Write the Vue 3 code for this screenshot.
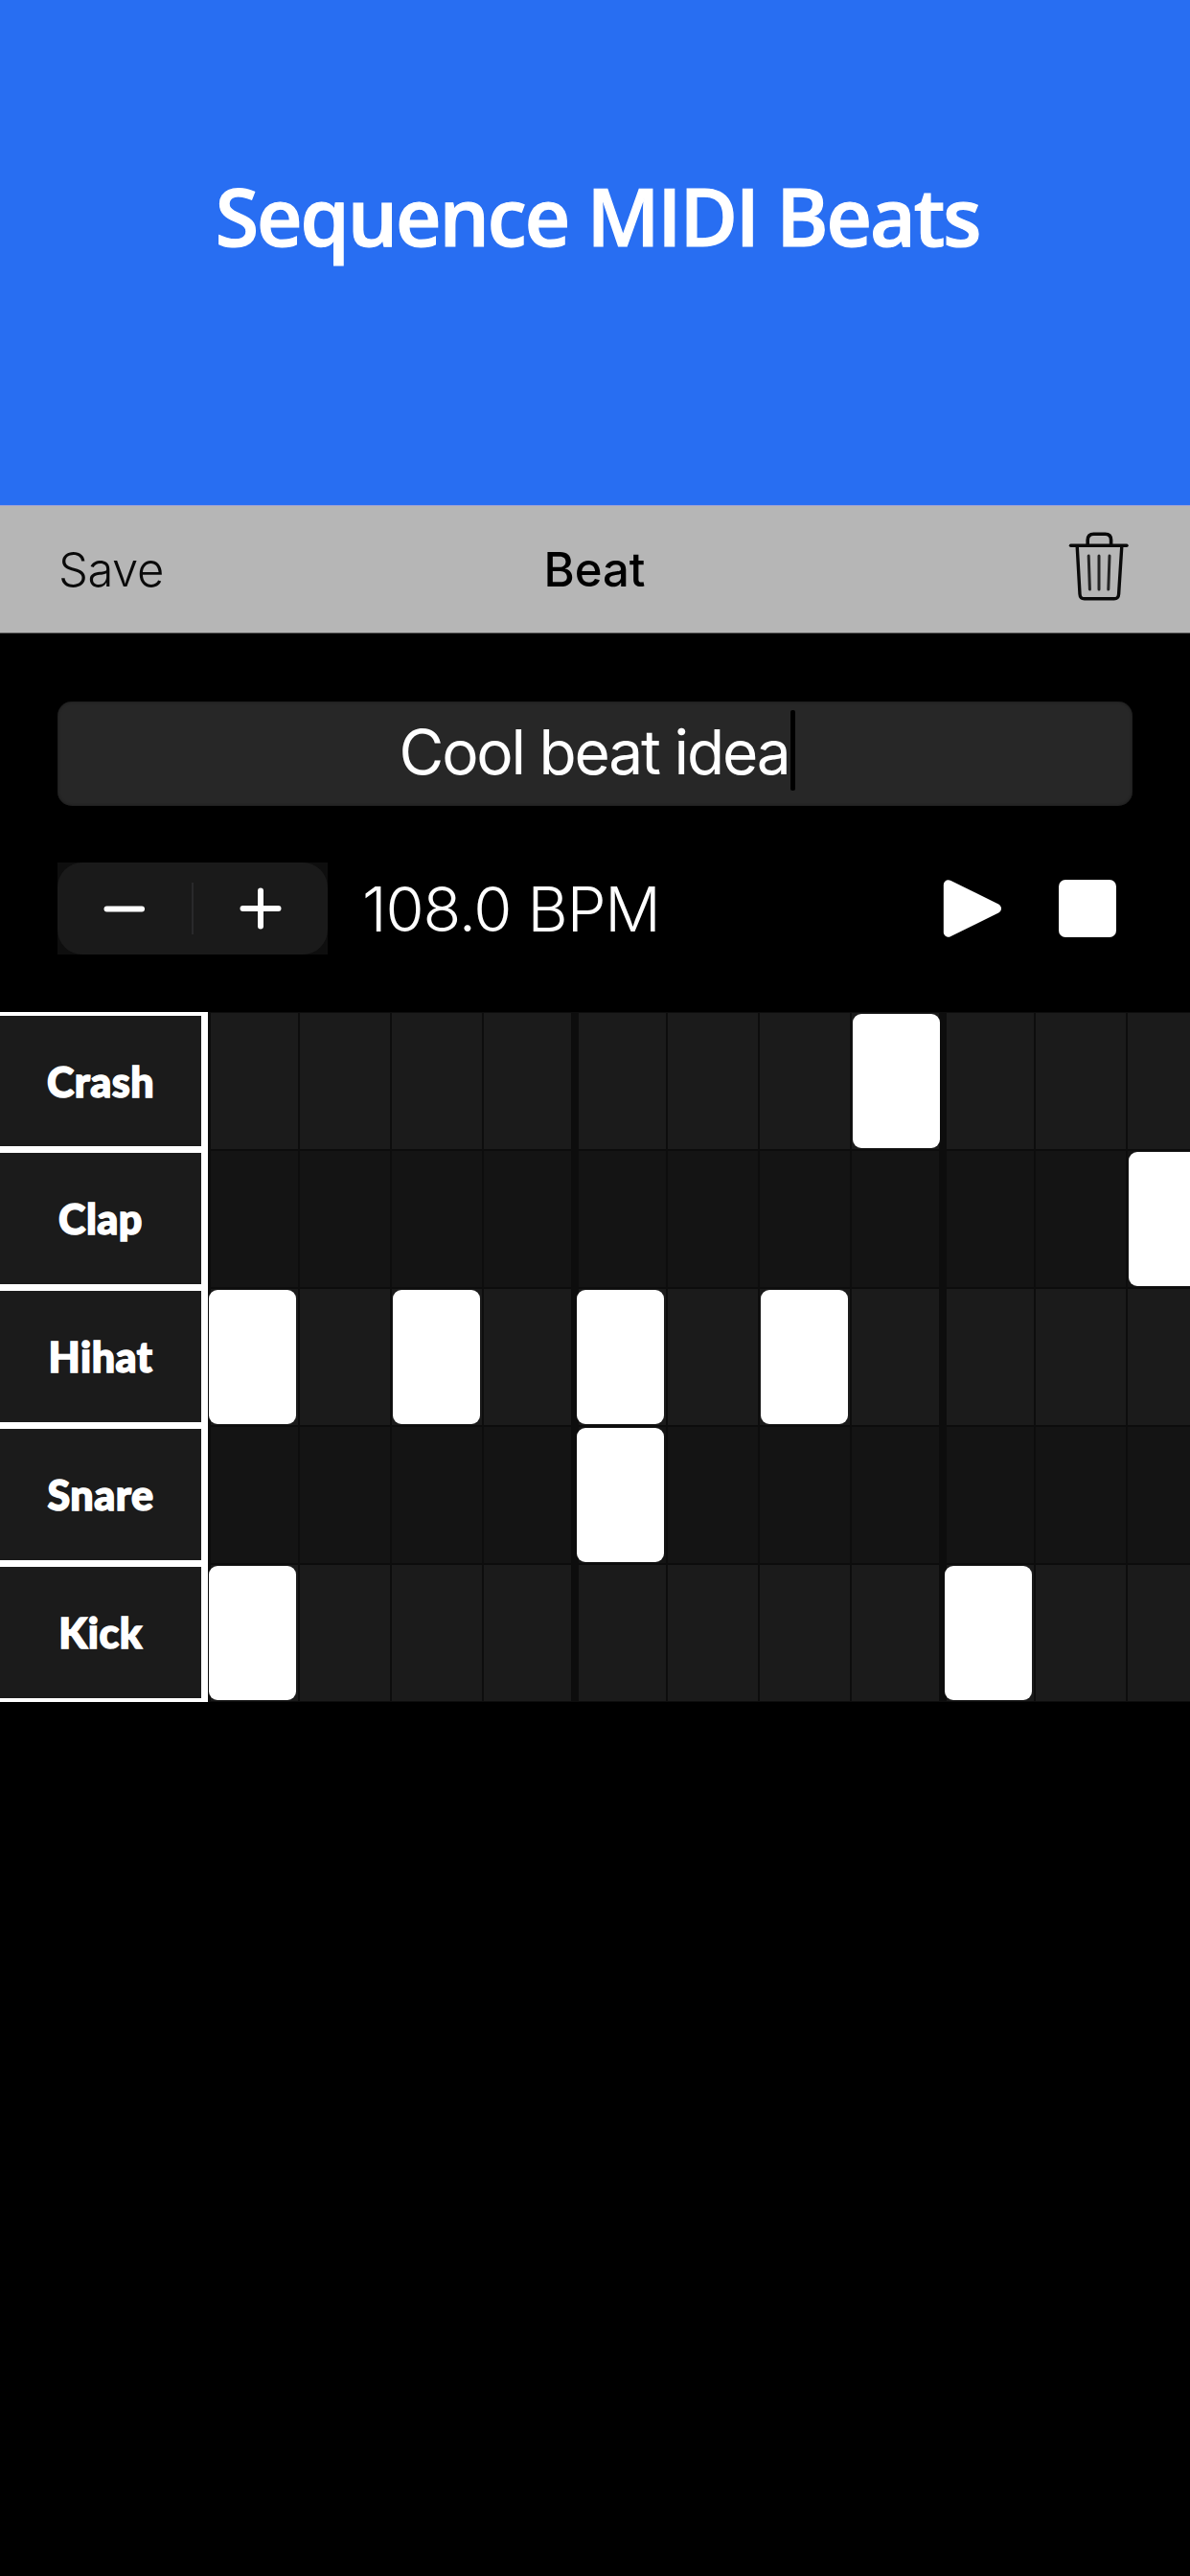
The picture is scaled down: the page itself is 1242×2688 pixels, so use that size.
<template>
  <div class="screen">
    <header class="banner">
      <h1>Sequence MIDI Beats</h1>
    </header>

    <nav class="nav-bar">
      <button type="button" class="nav-btn save">Save</button>
      <span class="nav-title">Beat</span>
      <button type="button" class="nav-btn trash" aria-label="Delete" @click="clearAll">
        <svg width="66" height="76" viewBox="0 0 66 76" fill="none" stroke="#0a0a0a" stroke-linecap="round" stroke-linejoin="round">
          <path d="M3.5 17.2H62" stroke-width="3.4" />
          <path d="M21.2 17V11.5Q21.2 5.2 27.5 5.2H39.5Q45.6 5.2 45.6 11.5V17" stroke-width="3.6" />
          <path d="M10.2 18L13 68Q13.3 72.8 17.8 72.8H48.8Q53.3 72.8 53.6 68L56.8 18" stroke-width="3.4" />
          <path d="M22.2 28L23.4 63M33 28V63M44 28L42.8 63" stroke="#242424" stroke-width="3" />
        </svg>
      </button>
    </nav>

    <div class="controls">
      <div class="name-field">
        <span class="name-text">{{ beatName }}</span><span class="caret"></span>
      </div>

      <div class="transport">
        <div class="stepper">
          <div class="stepper-inner">
            <button type="button" class="step-btn" aria-label="Slower" @click="bpm--">
              <svg width="46" height="46" viewBox="0 0 46 46" stroke="#fff" stroke-width="6" stroke-linecap="round">
                <path d="M4.5 23.5H41" />
              </svg>
            </button>
            <span class="step-divider"></span>
            <button type="button" class="step-btn" aria-label="Faster" @click="bpm++">
              <svg width="46" height="46" viewBox="0 0 46 46" stroke="#fff" stroke-width="6" stroke-linecap="round">
                <path d="M4.5 23H41.5M23 4.5V41.5" />
              </svg>
            </button>
          </div>
        </div>
        <span class="bpm">{{ bpm.toFixed(1) }} BPM</span>
        <button type="button" class="icon-btn play" aria-label="Play" @click="playing = true">
          <svg width="62" height="62" viewBox="0 0 62 62" fill="#fff" stroke="#fff" stroke-width="10" stroke-linejoin="round">
            <path d="M5.8 6.2L56 31L5.8 55.8Z" />
          </svg>
        </button>
        <button type="button" class="icon-btn stop" aria-label="Stop" @click="playing = false"></button>
      </div>
    </div>

    <div class="sequencer">
      <div v-for="track in tracks" :key="track.name" class="track">
        <div class="track-label">{{ track.name }}</div>
        <div class="steps">
          <div
            v-for="step in STEPS"
            :key="step"
            class="step"
            :class="{ 'beat-start': step % 4 === 1, 'beat-end': step % 4 === 0 }"
            @click="toggle(track, step)"
          >
            <div v-if="track.hits.includes(step)" class="note"></div>
          </div>
        </div>
      </div>
    </div>
  </div>
</template>

<script setup>
import { ref } from 'vue';

const STEPS = 16;

const beatName = ref('Cool beat idea');
const bpm = ref(108);
const playing = ref(false);

// step numbers start at 1
const tracks = ref([
  { name: 'Crash', hits: [8] },
  { name: 'Clap', hits: [11] },
  { name: 'Hihat', hits: [1, 3, 5, 7] },
  { name: 'Snare', hits: [5] },
  { name: 'Kick', hits: [1, 9] }
]);

function toggle(track, step) {
  const i = track.hits.indexOf(step);
  if (i >= 0) {
    track.hits.splice(i, 1);
  } else {
    track.hits.push(step);
  }
}

function clearAll() {
  tracks.value.forEach((t) => { t.hits = []; });
}
</script>

<style>
body { margin: 0; background: #000; }
</style>

<style scoped>
.screen {
  width: 1242px;
  height: 2688px;
  overflow: hidden;
  background: #000;
  color: #fff;
  font-family: Inter, "Liberation Sans", sans-serif;
}

button {
  padding: 0;
  border: none;
  background: none;
  color: inherit;
  font: inherit;
  cursor: pointer;
}

svg { display: block; }

.banner {
  height: 527px;
  background: #286ef2;
  text-align: center;
}
.banner h1 {
  margin: 0;
  padding: 169px 0 0 5px;
  font-family: "Open Sans", "Noto Sans", sans-serif;
  font-size: 82.5px;
  font-weight: 600;
  line-height: 112px;
  letter-spacing: -2.1px;
  -webkit-text-stroke: 1.2px #fff;
}

.nav-bar {
  display: grid;
  grid-template-columns: 1fr auto 1fr;
  align-items: center;
  height: 134px;
  padding: 0 62px 0 61px;
  box-sizing: border-box;
  border-top: 1px solid #9d9fd4;
  border-bottom: 1px solid #626262;
  background: #b6b6b6;
  color: #000;
}
.nav-btn.save { justify-self: start; font-size: 49px; font-weight: 300; letter-spacing: -0.5px; color: #0a0a0a; }
.nav-title { font-size: 49px; font-weight: 500; }
.nav-btn.trash { justify-self: end; margin-top: -8px; }

.controls { padding: 71px 60px 0; }

.name-field {
  display: flex;
  align-items: center;
  justify-content: center;
  height: 109px;
  border-radius: 15px;
  background: #272727;
  box-shadow: inset 0 0 3px #161616;
}
.name-text { margin-top: -4px; font-size: 64px; font-weight: 400; letter-spacing: -2.2px; line-height: 84px; }
.caret { width: 5px; height: 84px; margin: -7px -5px 0 2px; border-radius: 2px; background: #000; }

.transport {
  display: flex;
  align-items: center;
  height: 96px;
  margin-top: 59px;
}
.stepper { width: 282px; height: 96px; background: #0e0e0e; }
.stepper-inner {
  display: flex;
  align-items: center;
  height: 100%;
  border-radius: 26px;
  background: #1a1a1a;
}
.step-btn { flex: 1; display: flex; justify-content: center; }
.step-divider { width: 2px; height: 54px; background: #29292b; }
.bpm { margin-left: 36px; font-size: 65px; font-weight: 300; letter-spacing: -1.1px; }
.icon-btn.play { margin-left: auto; }
.icon-btn.stop {
  width: 60px;
  height: 60px;
  margin: 0 17px 0 59px;
  border-radius: 7px;
  background: #fff;
}

.sequencer { margin-top: 60px; }
.track { display: flex; height: 144px; }
.track-label {
  flex: none;
  display: flex;
  align-items: center;
  justify-content: center;
  width: 217px;
  box-sizing: border-box;
  z-index: 1;
  border: solid #fff;
  border-width: 3px 7px 4px 0;
  background: #1b1b1b;
  font-family: Lato, sans-serif;
  font-size: 43px;
  font-weight: 900;
  letter-spacing: 0.5px;
  -webkit-text-stroke: 1.5px #fff;
}
.track:first-child .track-label { border-top-width: 4px; }
.steps { display: flex; margin-left: -1px; }
.step {
  flex: none;
  width: 96px;
  height: 144px;
  box-sizing: border-box;
  border: 1px solid #0d0d0d;
  background: #1b1b1b;
}
.track:nth-child(even) .step { background: #141414; }
.step.beat-start { border-left-width: 4px; }
.step.beat-end { border-right-width: 4px; }
.note {
  width: 91px;
  height: 140px;
  margin: 1px 0 0 1px;
  border-radius: 9px;
  background: #fff;
}
.beat-start .note { margin-left: -2px; }
</style>
